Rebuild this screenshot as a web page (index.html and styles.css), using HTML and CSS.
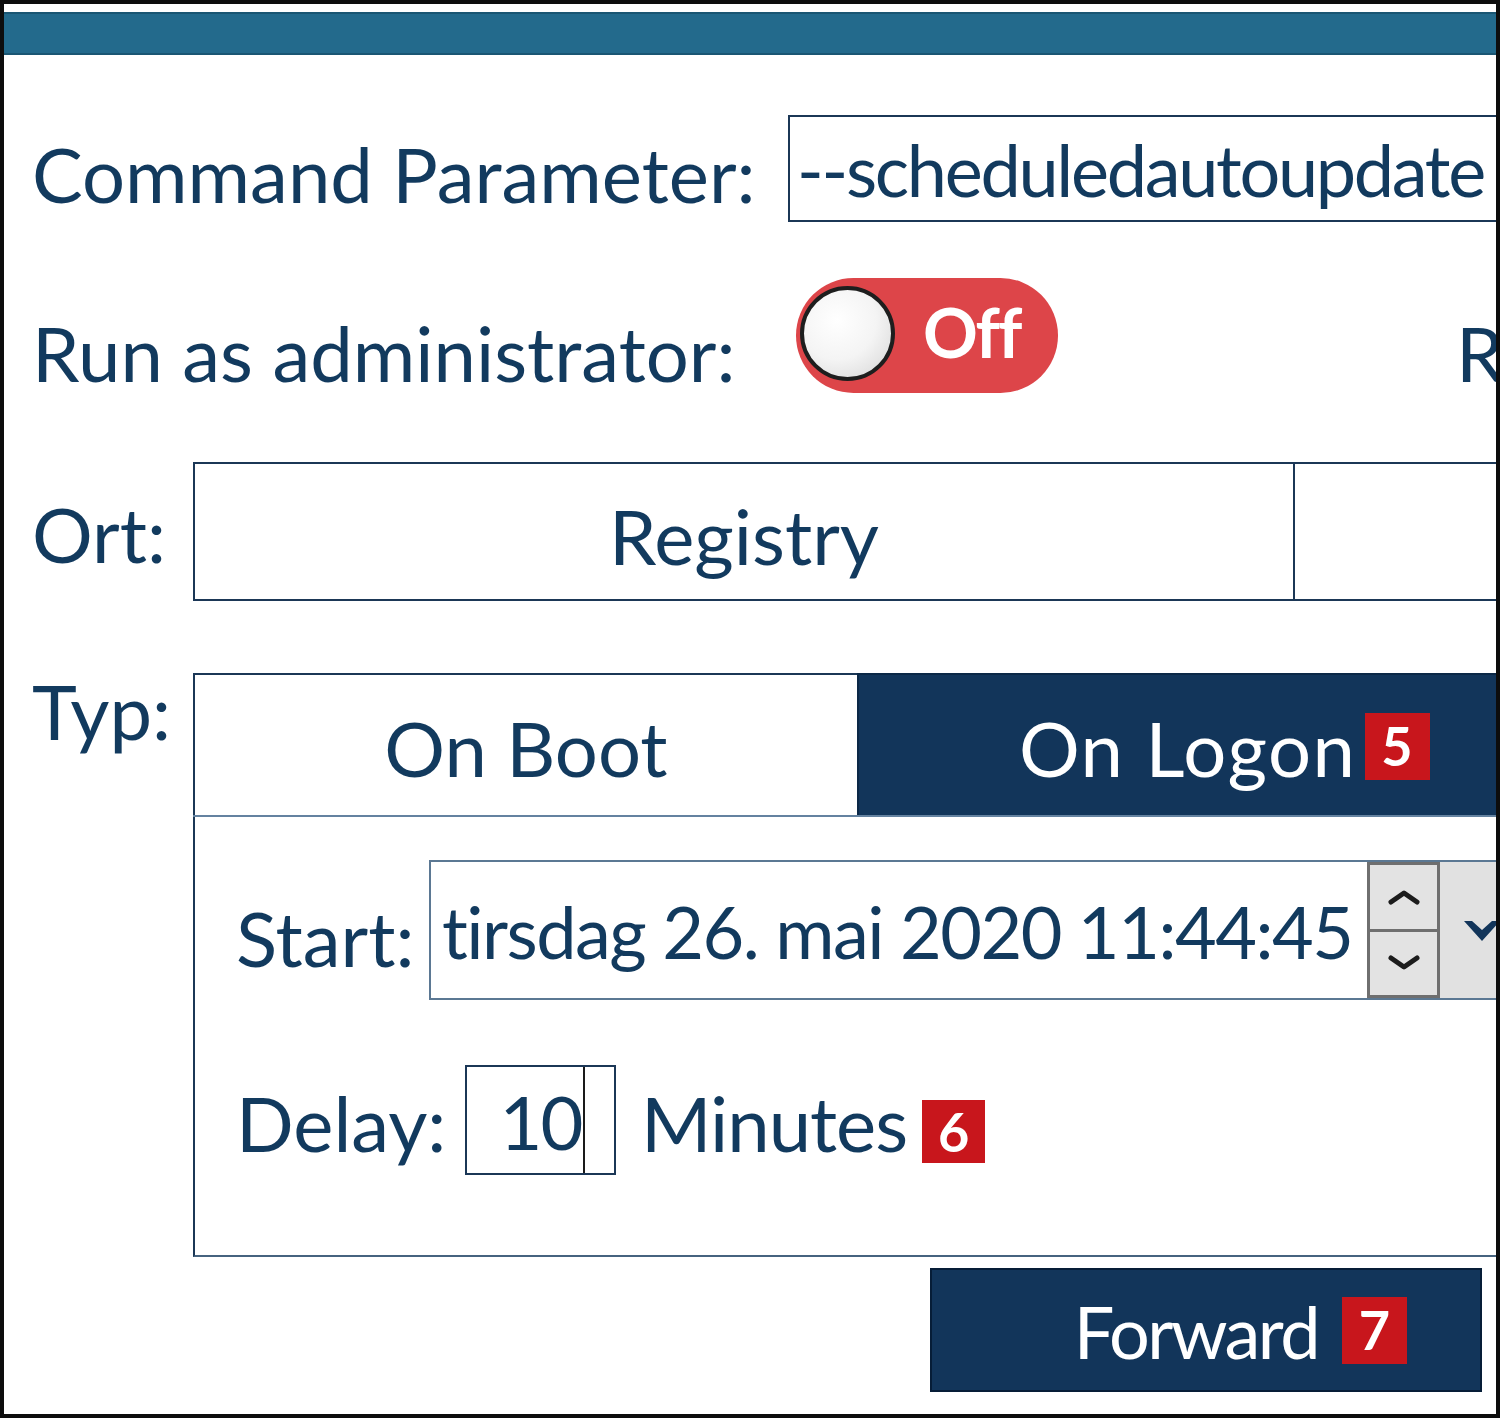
FILE: index.html
```html
<!DOCTYPE html>
<html lang="en">
<head>
<meta charset="utf-8">
<title>Autostart</title>
<link rel="stylesheet" href="styles.css">
</head>
<body>
<div class="window">
  <div class="titlebar"></div>
  <div class="content">
    <div class="row row-cmd">
      <span class="label label-cmd">Command Parameter:</span>
      <div class="textbox">--scheduledautoupdate</div>
    </div>
    <div class="row row-admin">
      <span class="label label-admin">Run as administrator:</span>
      <div class="toggle"><span class="knob"></span><span class="toggle-text">Off</span></div>
      <span class="label label-next">Run</span>
    </div>
    <div class="row row-ort">
      <span class="label label-short">Ort:</span>
      <div class="segmented">
        <div class="seg seg-first">Registry</div>
        <div class="seg"></div>
      </div>
    </div>
    <div class="row row-typ">
      <span class="label label-short label-top">Typ:</span>
      <div class="tabs">
        <div class="tab-header">
          <div class="tab">On Boot</div>
          <div class="tab tab-active">On Logon<span class="badge">5</span></div>
        </div>
        <div class="tab-panel">
          <div class="prow prow-start">
            <span class="label label-start">Start:</span>
            <div class="datepicker">
              <div class="date-text">tirsdag 26. mai 2020 11:44:45</div>
              <div class="spinner">
                <div class="spin-btn">
                  <svg width="34" height="20" viewBox="0 0 34 20"><polyline points="4,15 17,6 30,15" fill="none" stroke="#1c1c1c" stroke-width="5" stroke-linejoin="round" stroke-linecap="round"/></svg>
                </div>
                <div class="spin-btn">
                  <svg width="34" height="20" viewBox="0 0 34 20"><polyline points="4,5 17,14 30,5" fill="none" stroke="#1c1c1c" stroke-width="5" stroke-linejoin="round" stroke-linecap="round"/></svg>
                </div>
              </div>
              <div class="drop-btn">
                <svg width="40" height="26" viewBox="0 0 40 26"><path d="M2 4 L20 24 L38 4 L30 4 L20 13 L10 4 Z" fill="#12355a"/></svg>
              </div>
            </div>
          </div>
          <div class="prow prow-delay">
            <span class="label label-delay">Delay:</span>
            <div class="numbox"><span class="num">10</span><span class="caret"></span></div>
            <span class="label label-minutes">Minutes</span>
            <span class="badge badge-inline">6</span>
          </div>
        </div>
      </div>
    </div>
  </div>
  <div class="actions">
    <button class="btn-forward" type="button">Forward<span class="badge">7</span></button>
  </div>
</div>
</body>
</html>
```

FILE: styles.css
```css
* {
  box-sizing: border-box;
}

html,
body {
  margin: 0;
  padding: 0;
  background: #ffffff;
}

body {
  font-family: Lato, "Open Sans", sans-serif;
  color: #123a5e;
}

.window {
  width: 1500px;
  height: 1418px;
  border: 4px solid #0d0d0d;
  background: #ffffff;
  overflow: hidden;
}

.titlebar {
  margin-top: 8px;
  height: 43px;
  background: #236a8c;
  border-top: 2px solid #1a5673;
  border-bottom: 2px solid #1a5673;
}

.content {
  padding-left: 28px;
}

.row {
  display: flex;
  align-items: flex-start;
  white-space: nowrap;
}

.label {
  flex: none;
  font-size: 76px;
  line-height: 1;
}

/* row 1 */
.row-cmd {
  margin-top: 60px;
}

.label-cmd {
  width: 756px;
  margin-top: 21px;
}

.textbox {
  flex: none;
  width: 900px;
  height: 107px;
  border: 2px solid #1b3756;
  padding-left: 7px;
  padding-top: 4px;
  font-size: 72px;
  line-height: 96px;
  letter-spacing: -2.3px;
}

/* row 2 */
.row-admin {
  margin-top: 56px;
}

.label-admin {
  width: 764px;
  margin-top: 37px;
}

.toggle {
  flex: none;
  display: flex;
  align-items: center;
  width: 262px;
  height: 115px;
  border-radius: 58px;
  background: #dd4549;
}

.knob {
  flex: none;
  width: 95px;
  height: 95px;
  margin-left: 4px;
  margin-top: -4px;
  border-radius: 50%;
  border: 4px solid #1e1e1e;
  background: radial-gradient(circle at 38% 35%, #ffffff 0, #f4f4f4 50%, #d4d4d4 100%);
}

.toggle-text {
  margin-left: 28px;
  margin-top: -8px;
  font-size: 68px;
  font-weight: 700;
  line-height: 1;
  letter-spacing: -2px;
  color: #ffffff;
}

.label-next {
  margin-left: 398px;
  margin-top: 37px;
}

/* row 3 */
.row-ort {
  margin-top: 69px;
}

.label-short {
  width: 161px;
  margin-top: 34px;
}

.segmented {
  flex: none;
  display: flex;
  width: 1500px;
  height: 139px;
  border: 2px solid #1b3756;
}

.seg {
  flex: 1;
  display: flex;
  align-items: center;
  justify-content: center;
  font-size: 76px;
  line-height: 1;
  padding-top: 9px;
}

.seg-first {
  flex: none;
  width: 1100px;
  border-right: 2px solid #1b3756;
}

/* row 4 */
.row-typ {
  margin-top: 72px;
}

.label-top {
  margin-top: 0;
}

.tabs {
  flex: none;
  width: 1500px;
  height: 584px;
  display: flex;
  flex-direction: column;
}

.tab-header {
  flex: none;
  display: flex;
  height: 144px;
  border-bottom: 2px solid #6482a0;
}

.tab {
  flex: none;
  display: flex;
  align-items: center;
  justify-content: center;
  width: 664px;
  border-top: 2px solid #1b3756;
  border-left: 2px solid #1b3756;
  font-size: 76px;
  line-height: 1;
  padding-top: 6px;
}

.tab-active {
  width: 736px;
  justify-content: flex-start;
  padding-left: 160px;
  background: #12355a;
  border-top-color: #0b2847;
  border-left-color: #0b2847;
  color: #ffffff;
  letter-spacing: 1.5px;
}

.badge {
  flex: none;
  display: inline-flex;
  align-items: center;
  justify-content: center;
  width: 65px;
  height: 67px;
  margin-left: 14px;
  background: #c8161c;
  color: #ffffff;
  font-size: 54px;
  font-weight: 700;
  line-height: 1;
  letter-spacing: 0;
}

.tab-active .badge {
  margin-top: -4px;
  margin-left: 8px;
}

.tab-panel {
  flex: 1;
  border-left: 2px solid #1b3756;
  border-bottom: 2px solid #46637f;
  padding-top: 43px;
}

.prow {
  display: flex;
  align-items: flex-start;
  white-space: nowrap;
  padding-left: 41px;
}

.label-start {
  width: 193px;
  margin-top: 40px;
}

.datepicker {
  flex: none;
  display: flex;
  width: 1200px;
  height: 140px;
  border: 2px solid #5b7893;
}

.date-text {
  flex: none;
  width: 936px;
  padding-left: 11px;
  padding-top: 2px;
  font-size: 72px;
  line-height: 134px;
  letter-spacing: -1.5px;
}

.spinner {
  flex: none;
  width: 73px;
  display: flex;
  flex-direction: column;
  border: 3px solid #6f6f6f;
  background: #e3e3e3;
}

.spin-btn {
  flex: 1;
  display: flex;
  align-items: center;
  justify-content: center;
}

.spin-btn + .spin-btn {
  border-top: 3px solid #6f6f6f;
}

.drop-btn {
  flex: 1;
  display: flex;
  align-items: center;
  padding-left: 22px;
  background: #e1e1e1;
}

.prow-delay {
  margin-top: 65px;
}

.label-delay {
  width: 229px;
  margin-top: 20px;
}

.numbox {
  flex: none;
  display: flex;
  justify-content: center;
  width: 151px;
  height: 110px;
  border: 2px solid #1b3756;
}

.num {
  padding-left: 4px;
  font-size: 74px;
  line-height: 110px;
  letter-spacing: -2px;
}

.caret {
  flex: none;
  width: 2px;
  margin-left: 2px;
  background: #1a1a1a;
}

.label-minutes {
  margin-left: 25px;
  margin-top: 20px;
  letter-spacing: -1px;
}

.badge-inline {
  width: 63px;
  height: 63px;
  margin-left: 15px;
  margin-top: 35px;
}

/* actions */
.actions {
  display: flex;
  justify-content: flex-end;
  margin-top: 11px;
  padding-right: 14px;
}

.btn-forward {
  display: flex;
  align-items: center;
  justify-content: flex-end;
  width: 552px;
  height: 124px;
  padding: 2px 73px 0 0;
  margin: 0;
  background: #12355a;
  border: 2px solid #061d37;
  color: #ffffff;
  font-family: Lato, "Open Sans", sans-serif;
  font-size: 72px;
  line-height: 1;
  letter-spacing: -2.5px;
}

.btn-forward .badge {
  margin-left: 24px;
  margin-top: -2px;
}
```
